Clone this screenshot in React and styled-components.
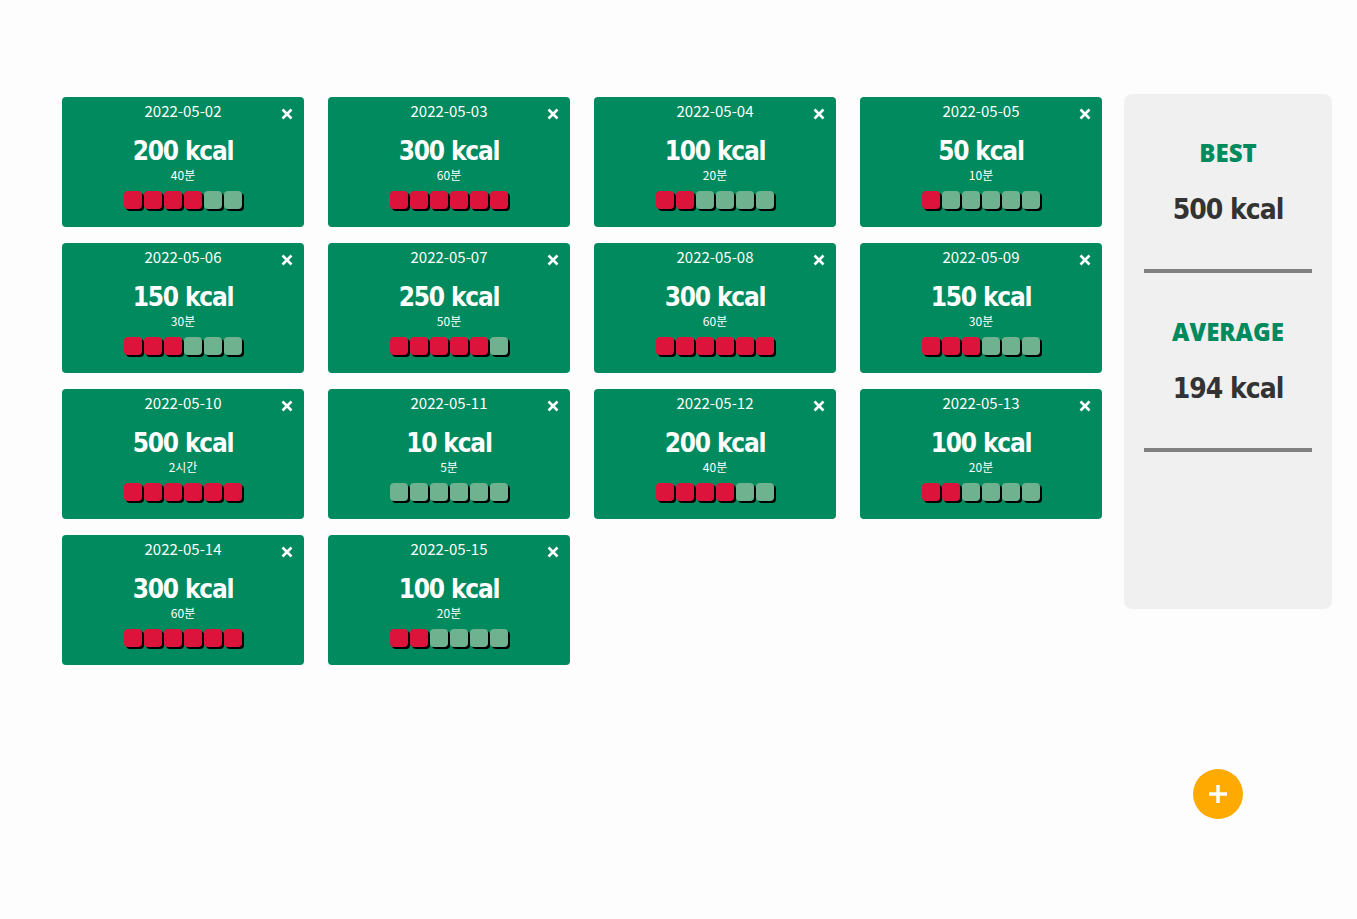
import React from "react";
import styled, { createGlobalStyle } from "styled-components";

const GlobalStyle = createGlobalStyle`
  body {
    margin: 0;
    background: #fdfdfd;
    font-family: "Noto Sans CJK KR", "Noto Sans", sans-serif;
  }
`;

const Page = styled.div`
  display: flex;
  align-items: flex-start;
  padding: 94px 0 0 62px;
  min-height: 919px;
  box-sizing: border-box;
`;

const Grid = styled.div`
  display: grid;
  grid-template-columns: repeat(4, 242px);
  gap: 16px 24px;
  margin-top: 3px;
`;

const Card = styled.div`
  position: relative;
  height: 130px;
  background: #008a5e;
  border-radius: 4px;
  color: #fff;
  display: flex;
  flex-direction: column;
  align-items: center;
  box-sizing: border-box;
  padding-top: 3px;
`;

const DateText = styled.div`
  font-size: 15px;
  line-height: 22px;
  font-family: "Noto Sans CJK KR", sans-serif;
`;

const Close = styled.button`
  position: absolute;
  top: 11px;
  right: 11px;
  width: 12px;
  height: 12px;
  padding: 0;
  border: 0;
  background: none;
  display: flex;
`;

const Kcal = styled.div`
  margin-top: 13px;
  font-family: "DejaVu Sans", sans-serif;
  font-stretch: condensed;
  font-weight: 700;
  font-size: 26px;
  line-height: 32px;
  letter-spacing: -1.2px;
`;

const Duration = styled.div`
  margin-top: 1px;
  font-size: 12px;
  line-height: 14px;
  font-family: "Noto Sans CJK KR", sans-serif;
`;

const Blocks = styled.div`
  display: flex;
  margin-top: 9px;
  margin-left: 2px;
`;

const Block = styled.span`
  width: 18px;
  height: 18px;
  margin-right: 2px;
  border-radius: 4px;
  background: ${(p) => (p.$on ? "#dc143c" : "#6fb290")};
  box-shadow: 2px 2px 0 #000;
`;

const Side = styled.aside`
  width: 208px;
  height: 515px;
  margin-left: 22px;
  background: #f0f0f0;
  border-radius: 8px;
  padding: 41px 20px 0;
  box-sizing: border-box;
  display: flex;
  flex-direction: column;
`;

const Stat = styled.div`
  display: flex;
  flex-direction: column;
  align-items: center;
  padding-bottom: 41px;
  border-bottom: 4px solid #808080;
  margin-bottom: 41px;
`;

const StatTitle = styled.div`
  color: #008a5e;
  font-family: "Open Sans", sans-serif;
  font-weight: 800;
  font-size: 24px;
  line-height: 36px;
`;

const StatValue = styled.div`
  margin-top: 21px;
  color: #333;
  font-family: "DejaVu Sans", sans-serif;
  font-stretch: condensed;
  font-weight: 700;
  font-size: 28px;
  line-height: 36px;
  letter-spacing: -1px;
`;

const Fab = styled.button`
  position: fixed;
  left: 1193px;
  top: 769px;
  width: 50px;
  height: 50px;
  border-radius: 50%;
  border: 0;
  background: #ffaa00;
  display: flex;
  align-items: center;
  justify-content: center;
  padding: 0;
`;

const records = [
  ["2022-05-02", 200, "40분"],
  ["2022-05-03", 300, "60분"],
  ["2022-05-04", 100, "20분"],
  ["2022-05-05", 50, "10분"],
  ["2022-05-06", 150, "30분"],
  ["2022-05-07", 250, "50분"],
  ["2022-05-08", 300, "60분"],
  ["2022-05-09", 150, "30분"],
  ["2022-05-10", 500, "2시간"],
  ["2022-05-11", 10, "5분"],
  ["2022-05-12", 200, "40분"],
  ["2022-05-13", 100, "20분"],
  ["2022-05-14", 300, "60분"],
  ["2022-05-15", 100, "20분"],
];

const XIcon = () => (
  <svg width="12" height="12" viewBox="0 0 12 12">
    <path d="M1.5 1.5 L10.5 10.5 M10.5 1.5 L1.5 10.5" stroke="#fff" strokeWidth="2.6" />
  </svg>
);

export default function App() {
  return (
    <>
      <GlobalStyle />
      <Page>
        <Grid>
          {records.map(([date, kcal, time]) => {
            const red = Math.min(6, Math.floor(kcal / 50));
            return (
              <Card key={date}>
                <DateText>{date}</DateText>
                <Close>
                  <XIcon />
                </Close>
                <Kcal>{kcal} kcal</Kcal>
                <Duration>{time}</Duration>
                <Blocks>
                  {Array.from({ length: 6 }, (_, i) => (
                    <Block key={i} $on={i < red} />
                  ))}
                </Blocks>
              </Card>
            );
          })}
        </Grid>
        <Side>
          <Stat>
            <StatTitle>BEST</StatTitle>
            <StatValue>500 kcal</StatValue>
          </Stat>
          <Stat>
            <StatTitle>AVERAGE</StatTitle>
            <StatValue>194 kcal</StatValue>
          </Stat>
        </Side>
      </Page>
      <Fab>
        <svg width="22" height="22" viewBox="0 0 22 22">
          <path d="M11 2 V20 M2 11 H20" stroke="#fff" strokeWidth="3.5" />
        </svg>
      </Fab>
    </>
  );
}
